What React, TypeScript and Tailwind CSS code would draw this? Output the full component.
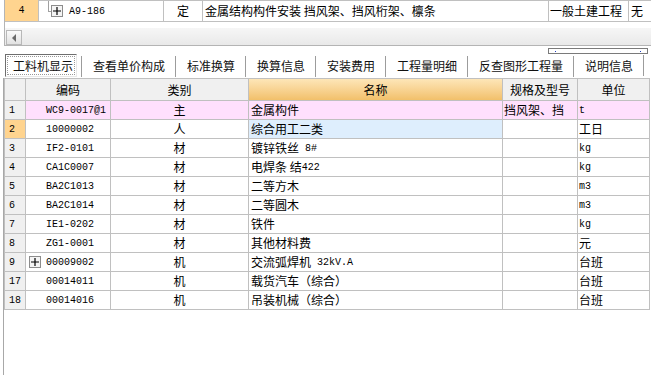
const cjk = "font-['Noto_Sans_CJK_SC','Noto_Sans',sans-serif]";
const mono = "font-['Liberation_Mono','DejaVu_Sans_Mono',monospace] text-[10px]";

type Row = {
  no: string;
  code: string;
  kind: string;
  name: React.ReactNode;
  spec?: string;
  unit: React.ReactNode;
  plus?: boolean;
};

const M = ({ children, gap }: { children: React.ReactNode; gap?: boolean }) => (
  <span className={`${mono} ${gap ? "ml-[6px]" : ""}`}>{children}</span>
);

const rows: Row[] = [
  { no: "1", code: "WC9-0017@1", kind: "主", name: "金属构件", spec: "挡风架、挡", unit: <M>t</M> },
  { no: "2", code: "10000002", kind: "人", name: "综合用工二类", unit: "工日" },
  { no: "3", code: "IF2-0101", kind: "材", name: <>镀锌铁丝<M gap>8#</M></>, unit: <M>kg</M> },
  { no: "4", code: "CA1C0007", kind: "材", name: <>电焊条 结<M>422</M></>, unit: <M>kg</M> },
  { no: "5", code: "BA2C1013", kind: "材", name: "二等方木", unit: <M>m3</M> },
  { no: "6", code: "BA2C1014", kind: "材", name: "二等圆木", unit: <M>m3</M> },
  { no: "7", code: "IE1-0202", kind: "材", name: "铁件", unit: <M>kg</M> },
  { no: "8", code: "ZG1-0001", kind: "材", name: "其他材料费", unit: "元" },
  { no: "9", code: "00009002", kind: "机", name: <>交流弧焊机<M gap>32kV.A</M></>, unit: "台班", plus: true },
  { no: "17", code: "00014011", kind: "机", name: "载货汽车（综合）", unit: "台班" },
  { no: "18", code: "00014016", kind: "机", name: "吊装机械（综合）", unit: "台班" },
];

const tabs = ["查看单价构成", "标准换算", "换算信息", "安装费用", "工程量明细", "反查图形工程量", "说明信息"];

const PlusBox = () => (
  <span className="flex h-[12px] w-[12px] items-center justify-center border border-[#8c8c8c] bg-[#f4f4f4]">
    <svg width="8" height="8" viewBox="0 0 8 8">
      <path d="M0 4h8M4 0v8" stroke="#000" strokeWidth="1.2" />
    </svg>
  </span>
);

const App = () => {
  return (
    <div className={`h-[375px] w-[651px] overflow-hidden bg-white text-[12px] text-black ${cjk}`}>
      {/* 上部定额行 */}
      <div className="ml-[4px] h-[46px] border-b border-l border-[#b4b4b4]">
        <div className="flex h-[22px] border-b border-[#c0c0c0]">
          <div className={`flex w-[34px] items-center justify-center border-r border-[#c0c0c0] bg-[#ffd48f] ${mono}`}>4</div>
          <div className="flex w-[125px] items-center border-r border-t border-[#c0c0c0]">
            <span className="ml-[9px] h-[11px] w-[3px] self-start border-b border-l border-[#a0a0a0]" />
            <PlusBox />
            <span className={`ml-[6px] ${mono}`}>A9-186</span>
          </div>
          <div className="flex w-[39px] items-center justify-center border-r border-t border-[#c0c0c0]">定</div>
          <div className="flex w-[346px] items-center whitespace-nowrap border-r border-t border-[#c0c0c0] pl-[2px]">
            金属结构构件安装 挡风架、挡风桁架、檩条
          </div>
          <div className="flex w-[80px] items-center border-r border-t border-[#c0c0c0] pl-[1px]">一般土建工程</div>
          <div className="flex flex-1 items-center border-t border-[#c0c0c0] pl-[2px]">无</div>
        </div>
        <div className="h-[6px]" />
        <div className="flex h-[17px] items-start bg-gradient-to-b from-[#f6f6f6] to-[#e9e9e9] pl-[1px] pt-[2px]">
          <div className="flex h-[15px] w-[16px] items-center justify-center border border-[#b8b8b8] bg-gradient-to-b from-[#fafafa] to-[#e2e2e2]">
            <svg width="6" height="8" viewBox="0 0 6 8">
              <path d="M5 0L1 4l4 4z" fill="#6a6a6a" />
            </svg>
          </div>
        </div>
      </div>

      {/* 标签栏 */}
      <div className="flex h-[8px] justify-end pt-[2px] pr-[3px]">
        <div className="relative h-[6px] w-[100px] border border-[#7a7a7a] bg-white">
          <span className="absolute left-[6px] top-[2px] h-[1px] w-[1px] bg-[#2040c0]" />
          <span className="absolute right-[6px] top-[2px] h-[1px] w-[1px] bg-[#2040c0]" />
        </div>
      </div>
      <div className="flex h-[24px] items-start pl-[5px]">
        <div className="flex h-[23px] w-[72px] items-center border border-b-[#e8e8e8] border-l-[#6e6e6e] border-r-[#e8e8e8] border-t-[#6e6e6e] bg-white p-[1px]">
          <div className="flex h-full w-full items-center border border-dotted border-[#9a9a9a] pl-[5px] text-[#111]">
            工料机显示
          </div>
        </div>
        <div className="w-[4px]" />
        {tabs.map((t) => (
          <div key={t} className="flex h-[23px] items-center">
            <span className="mt-[1px] h-[21px] w-[1px] bg-[#9c9c9c]" />
            <span className="whitespace-nowrap pl-[11px] pr-[10px] leading-[23px] text-[#111]">{t}</span>
          </div>
        ))}
        <span className="mt-[1px] h-[21px] w-[1px] bg-[#9c9c9c]" />
      </div>

      {/* 工料机表格 */}
      <div className="ml-[3px] h-[297px] border-l border-[#a8a8a8]">
        <div className="w-[646px] border-l border-t border-[#c0c0c0]">
          <div className="flex h-[22px] border-b border-[#c0c0c0] bg-[#f0f0f0]">
            <div className="w-[21px] border-r border-[#c0c0c0]" />
            <div className="flex w-[85px] items-center justify-center border-r border-[#c0c0c0]">编码</div>
            <div className="flex w-[138px] items-center justify-center border-r border-[#c0c0c0]">类别</div>
            <div className="flex w-[254px] items-center justify-center border-r border-[#c0c0c0] bg-gradient-to-b from-[#fde6b8] to-[#f2c06a]">
              名称
            </div>
            <div className="flex w-[75px] items-center justify-center border-r border-[#c0c0c0]">规格及型号</div>
            <div className="flex w-[72px] items-center justify-center border-r border-[#c0c0c0]">单位</div>
          </div>
          {rows.map((r, i) => {
            const bg = i === 0 ? "bg-[#ffe0fd]" : "bg-white";
            return (
              <div key={r.no} className={`flex h-[19px] border-b border-[#c0c0c0] ${bg}`}>
                <div
                  className={`flex w-[21px] items-center border-r border-[#c0c0c0] pl-[4px] ${mono} ${
                    i === 1 ? "bg-[#ffd48f]" : "bg-[#f0f0f0]"
                  }`}
                >
                  {r.no}
                </div>
                <div className="flex w-[85px] items-center border-r border-[#c0c0c0] pl-[3px]">
                  <span className="w-[17px]">{r.plus && <PlusBox />}</span>
                  <span className={mono}>{r.code}</span>
                </div>
                <div className="flex w-[138px] items-center justify-center border-r border-[#c0c0c0]">{r.kind}</div>
                <div
                  className={`flex w-[254px] items-center whitespace-nowrap border-r border-[#c0c0c0] pl-[2px] ${
                    i === 1 ? "bg-[#deeefd]" : ""
                  }`}
                >
                  {r.name}
                </div>
                <div className="flex w-[75px] items-center whitespace-nowrap border-r border-[#c0c0c0] pl-[1px]">
                  {r.spec}
                </div>
                <div className="flex w-[72px] items-center border-r border-[#c0c0c0] pl-[1px]">{r.unit}</div>
              </div>
            );
          })}
        </div>
      </div>
    </div>
  );
};

export default App;
